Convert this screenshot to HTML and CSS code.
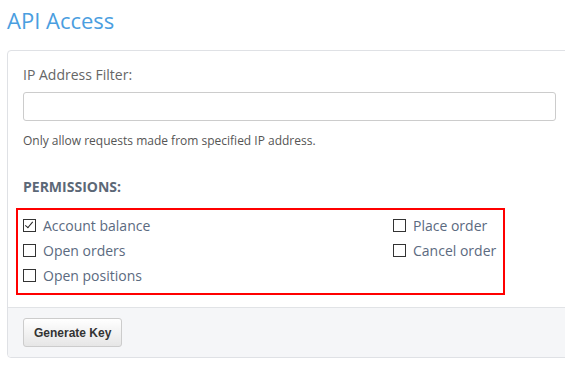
FILE: index.html
```html
<!DOCTYPE html>
<html lang="en">
<head>
  <meta charset="UTF-8">
  <title>API Access</title>
  <link rel="stylesheet" href="styles.css">
</head>
<body>
  <div class="page">
    <h1 class="page-title">API Access</h1>
    <div class="panel">
      <div class="panel-body">
        <label class="field-label" for="ipFilter">IP Address Filter:</label>
        <input type="text" id="ipFilter" class="field-input">
        <p class="help">Only allow requests made from specified IP address.</p>

        <h4 class="section-title">PERMISSIONS:</h4>
        <div class="permissions">
          <label class="perm"><span class="box checked"></span>Account balance</label>
          <label class="perm"><span class="box"></span>Place order</label>
          <label class="perm"><span class="box"></span>Open orders</label>
          <label class="perm"><span class="box"></span>Cancel order</label>
          <label class="perm"><span class="box"></span>Open positions</label>
        </div>
      </div>
      <div class="panel-footer">
        <button class="btn">Generate Key</button>
      </div>
    </div>
  </div>
</body>
</html>
```

FILE: styles.css
```css
html, body {
  margin: 0;
  background: #fff;
  overflow: hidden;
}

body {
  font-family: "Open Sans", "Liberation Sans", sans-serif;
  color: #666;
}

.page {
  padding: 4px 0 0 7px;
  width: 566px;
}

.page-title {
  margin: 0 0 14px 0;
  font-size: 22px;
  font-weight: 400;
  line-height: 32px;
  color: #4a9ee0;
}

.panel {
  border: 1px solid #dfe1e5;
  border-radius: 4px;
  background: #fff;
}

.panel-body {
  padding: 14px 15px 12px 15px;
}

.field-label {
  display: block;
  font-size: 14px;
  line-height: 20px;
  color: #666;
  margin-bottom: 7px;
}

.field-input {
  display: block;
  box-sizing: border-box;
  width: 533px;
  height: 29px;
  border: 1px solid #ccc;
  border-radius: 3px;
  background: #fff;
}

.help {
  margin: 11px 0 0 0;
  font-size: 12px;
  line-height: 17px;
  color: #555;
}

.section-title {
  margin: 29px 0 0 0;
  font-size: 14px;
  font-weight: 700;
  line-height: 18px;
  color: #5c6877;
}

.permissions {
  margin: 12px 0 0 -7px;
  width: 489px;
  box-sizing: border-box;
  border: 2px solid #f00;
  padding: 3px 0 5px 5px;
  display: grid;
  grid-template-columns: 370px auto;
}

.perm {
  display: flex;
  align-items: center;
  gap: 7px;
  height: 25px;
  font-size: 14px;
  color: #5b6a80;
}

.box {
  width: 11px;
  height: 11px;
  border: 1px solid #333;
  background: #fff;
  position: relative;
}

.box.checked::after {
  content: "";
  position: absolute;
  left: 3px;
  top: 0px;
  width: 3px;
  height: 7px;
  border: solid #222;
  border-width: 0 1.5px 1.5px 0;
  transform: rotate(40deg);
}

.panel-footer {
  background: #f5f6f8;
  border-top: 1px solid #e1e3e6;
  padding: 10px 15px;
  border-radius: 0 0 4px 4px;
}

.btn {
  display: block;
  font-family: "Liberation Sans", Arial, sans-serif;
  font-weight: 700;
  font-size: 12px;
  color: #333;
  height: 29px;
  padding: 0 10px;
  border: 1px solid #ccc;
  border-radius: 3px;
  background: linear-gradient(#fff, #e6e6e6);
}
```
